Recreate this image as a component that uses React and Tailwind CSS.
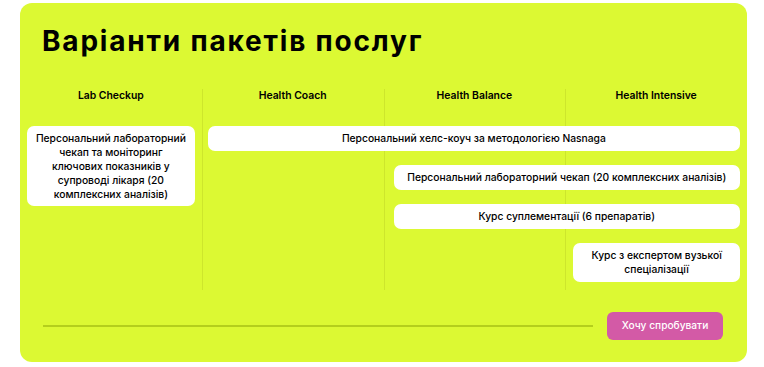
const packages = ['Lab Checkup', 'Health Coach', 'Health Balance', 'Health Intensive'];

function Cell({ className, children }) {
  return (
    <div
      className={`self-start rounded-[7px] bg-white text-center text-[10.3px] font-medium leading-[13.5px] text-black z-10 ${className}`}
    >
      {children}
    </div>
  );
}

export default function App() {
  return (
    <div className="min-h-screen bg-white pt-[3px] font-['Inter','Noto_Sans',sans-serif]">
      <div className="ml-[20px] w-[727px] h-[359px] rounded-[12px] bg-[#dcf933]">
        {/* Heading */}
        <h1 className="pt-[22px] pl-[22px] text-[28px] font-bold leading-[32px] tracking-[1.8px] text-black">
          Варіанти пакетів послуг
        </h1>

        {/* Package comparison table */}
        <div className="mt-[32px] grid grid-cols-4 grid-rows-[37px_39px_39px_39px_47px]">
          {/* column separators */}
          <div className="col-start-2 row-start-1 row-span-5 border-l-[1.5px] border-[#cde62c]" />
          <div className="col-start-3 row-start-1 row-span-5 border-l-[1.5px] border-[#cde62c]" />
          <div className="col-start-4 row-start-1 row-span-5 border-l-[1.5px] border-[#cde62c]" />

          {packages.map((name, i) => (
            <div
              key={name}
              className={`row-start-1 text-center text-[10.4px] font-semibold leading-[14px] text-black ${
                ['col-start-1', 'col-start-2', 'col-start-3', 'col-start-4'][i]
              }`}
            >
              {name}
            </div>
          ))}

          <Cell className="col-start-1 row-start-2 row-span-3 mx-[7px] px-[6px] py-[5px] leading-[14px]">
            Персональний лабораторний чекап та моніторинг ключових показників у супроводі лікаря (20 комплексних
            аналізів)
          </Cell>
          <Cell className="col-start-2 col-span-3 row-start-2 ml-[6px] mr-[7px] h-[25px] flex items-center justify-center">
            Персональний хелс-коуч за методологією Nasnaga
          </Cell>
          <Cell className="col-start-3 col-span-2 row-start-3 ml-[10px] mr-[7px] h-[25px] flex items-center justify-center">
            Персональний лабораторний чекап (20 комплексних аналізів)
          </Cell>
          <Cell className="col-start-3 col-span-2 row-start-4 ml-[10px] mr-[7px] h-[25px] flex items-center justify-center">
            Курс суплементації (6 препаратів)
          </Cell>
          <Cell className="col-start-4 row-start-5 ml-[8px] mr-[7px] h-[39px] flex items-center justify-center px-[14px]">
            Курс з експертом вузької спеціалізації
          </Cell>
        </div>

        {/* Footer with call to action */}
        <div className="mt-[22px] flex items-center gap-[14px] pl-[23px] pr-[24px]">
          <div className="h-[1.5px] flex-1 bg-[#b4cf1c]" />
          <button className="h-[28px] w-[116px] rounded-[6px] bg-[#d35aa6] text-[10.2px] font-medium text-white">
            Хочу спробувати
          </button>
        </div>
      </div>
    </div>
  );
}
